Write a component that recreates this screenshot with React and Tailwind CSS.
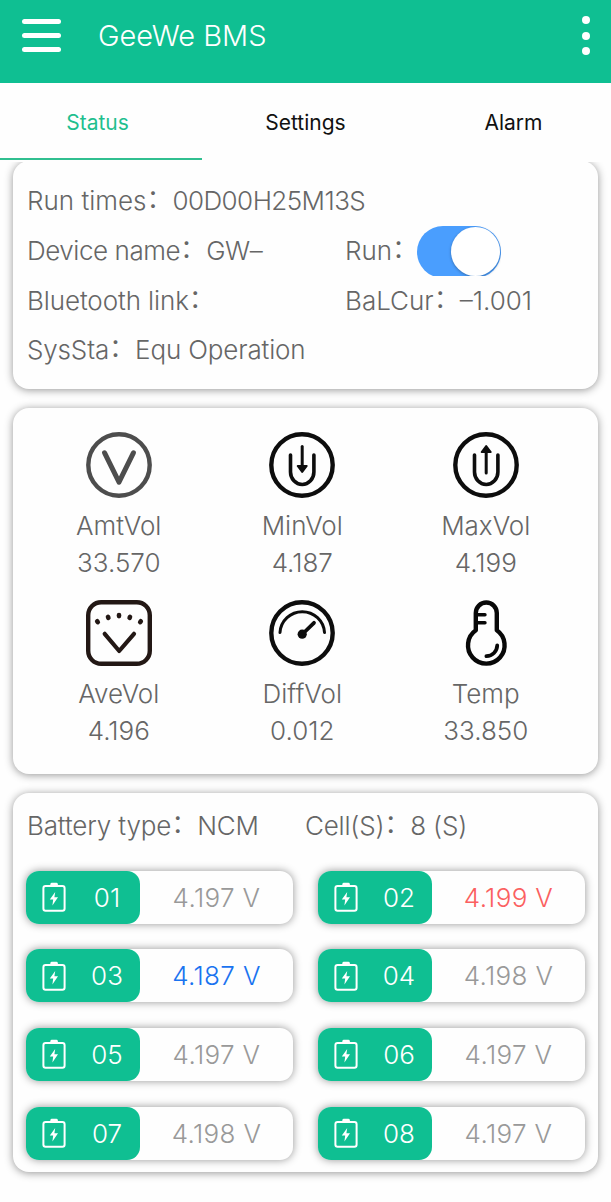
import React, { useState } from 'react';

const tabs = ['Status', 'Settings', 'Alarm'];

const cells = [
  { id: '01', voltage: '4.197' },
  { id: '02', voltage: '4.199', color: 'text-[#fb6060]' },
  { id: '03', voltage: '4.187', color: 'text-[#1a73f0]' },
  { id: '04', voltage: '4.198' },
  { id: '05', voltage: '4.197' },
  { id: '06', voltage: '4.197' },
  { id: '07', voltage: '4.198' },
  { id: '08', voltage: '4.197' }
];

const iconProps = {
  viewBox: '0 0 66 66',
  fill: 'none',
  strokeLinecap: 'round',
  className: 'h-[66px] w-[66px]'
};

const AmtIcon = () => (
  <svg {...iconProps} stroke="#4d4d4d">
    <circle cx="33" cy="33" r="30.7" strokeWidth="4.4" />
    <path d="M18.6 20.8L33 50.2L47.4 20.8" strokeWidth="5" strokeLinejoin="round" />
  </svg>
);

const MinIcon = () => (
  <svg {...iconProps} stroke="#0d0d0d">
    <circle cx="33" cy="33" r="30.7" strokeWidth="4.4" />
    <path d="M21.5 23V40a11.7 12.5 0 0 0 23.4 0V23" strokeWidth="3.6" />
    <path d="M33.2 14.5V34" strokeWidth="3" />
    <path d="M28.7 34H37.7L33.2 40Z" fill="#0d0d0d" strokeWidth="2" strokeLinejoin="round" />
  </svg>
);

const MaxIcon = () => (
  <svg {...iconProps} stroke="#0d0d0d">
    <circle cx="33" cy="33" r="30.7" strokeWidth="4.4" />
    <path d="M21.5 23V40a11.7 12.5 0 0 0 23.4 0V23" strokeWidth="3.6" />
    <path d="M33.2 41V20" strokeWidth="3" />
    <path d="M28.7 20H37.7L33.2 14Z" fill="#0d0d0d" strokeWidth="2" strokeLinejoin="round" />
  </svg>
);

const AveIcon = () => (
  <svg {...iconProps} stroke="#231815">
    <rect x="2.2" y="2.2" width="61.6" height="61.6" rx="13" strokeWidth="4.4" />
    <path d="M18.7 33.8L33.2 51L48 33.8" strokeWidth="4.2" strokeLinejoin="round" />
    <path
      d="M11.2 21.3l.6 .8M22 16.8l.4 1M33 15.1v1M44 16.8l-.4 1M54.8 21.3l-.6 .8"
      strokeWidth="4.6"
    />
  </svg>
);

const DiffIcon = () => (
  <svg {...iconProps} stroke="#0d0d0d">
    <circle cx="33" cy="33" r="30.7" strokeWidth="4.4" />
    <path d="M11 32.5a22.3 22.3 0 0 1 44.5 0" strokeWidth="3" />
    <path d="M33.5 34L45 22.8" strokeWidth="3.8" />
    <circle cx="33.2" cy="34.2" r="4.6" fill="#0d0d0d" stroke="none" />
  </svg>
);

const TempIcon = () => (
  <svg {...iconProps} stroke="#080808">
    <path
      d="M22.8 30.3V13a10.4 10.4 0 0 1 21 0V30.3a18.3 18.3 0 1 1-21 0Z"
      strokeWidth="4.4"
      strokeLinejoin="round"
    />
    <path d="M24 14.8H32M24 22.8H32" strokeWidth="3.4" />
    <path d="M44.2 45.5C44 51.5 39.5 56 33.4 56.2" strokeWidth="3.8" />
  </svg>
);

const stats = [
  { label: 'AmtVol', value: '33.570', Icon: AmtIcon },
  { label: 'MinVol', value: '4.187', Icon: MinIcon },
  { label: 'MaxVol', value: '4.199', Icon: MaxIcon },
  { label: 'AveVol', value: '4.196', Icon: AveIcon },
  { label: 'DiffVol', value: '0.012', Icon: DiffIcon },
  { label: 'Temp', value: '33.850', Icon: TempIcon }
];

const BatteryIcon = () => (
  <svg viewBox="0 0 24 30" className="h-[30px] w-6 shrink-0" fill="none">
    <rect x="1.4" y="4" width="21.2" height="24.8" rx="2.2" stroke="#fff" strokeWidth="2" />
    <path d="M8.4 3.4V2.2Q8.4 .8 9.8 .8H14.4Q15.8 .8 15.8 2.2V3.4Z" fill="#fff" />
    <path d="M13.2 10L7.8 17.6H11.2L10.4 23.6L16 15.2H12.4Z" fill="#fff" />
  </svg>
);

// The fullwidth colon is lifted to sit in the middle of the caps
const Colon = () => <span className="relative -top-0.5 tracking-normal">：</span>;

const Card = ({ className, children }) => (
  <section
    className={`rounded-[16px] bg-[#fefefe] shadow-[0_1px_9px_rgba(0,0,0,0.42)] ${className}`}
  >
    {children}
  </section>
);

const Switch = ({ checked, onChange }) => (
  <button
    type="button"
    role="switch"
    aria-checked={checked}
    aria-label="Run"
    onClick={() => onChange(!checked)}
    className="h-[50px] w-[84px] overflow-hidden"
  >
    <span
      className={`flex h-[52px] w-[84px] rounded-full p-px ${
        checked ? 'justify-end bg-[#4a9efe]' : 'justify-start bg-gray-300'
      }`}
    >
      <span className="h-[49px] w-[49px] rounded-full bg-white shadow-[0_1px_3px_rgba(0,0,0,0.3)]" />
    </span>
  </button>
);

const App = () => {
  const [tab, setTab] = useState('Status');
  const [running, setRunning] = useState(true);

  return (
    <div className="h-[1202px] w-[611px] overflow-hidden bg-[#fefefe] font-['Inter','Noto_Sans_CJK_SC',sans-serif] text-[26px] font-[340] text-[#666]">
      <header className="flex h-[83px] items-start bg-[#0fbf92] text-white">
        <button type="button" aria-label="Menu" className="mt-[19px] ml-[22px] flex flex-col gap-[9px]">
          <span className="h-[5px] w-[39px] rounded-full bg-white" />
          <span className="h-[5px] w-[39px] rounded-full bg-white" />
          <span className="h-[5px] w-[39px] rounded-full bg-white" />
        </button>
        <h1 className="mt-[18px] ml-[37px] text-[29px] leading-9 font-[340]">GeeWe BMS</h1>
        <button type="button" aria-label="More" className="mt-4 mr-[21px] ml-auto flex flex-col gap-[7.5px]">
          <span className="h-2 w-2 rounded-full bg-white" />
          <span className="h-2 w-2 rounded-full bg-white" />
          <span className="h-2 w-2 rounded-full bg-white" />
        </button>
      </header>

      <nav className="flex h-[77px] justify-center text-[21px] font-normal">
        {tabs.map((name) => (
          <button
            key={name}
            type="button"
            onClick={() => setTab(name)}
            className={`w-[208px] shrink-0 border-b-2 pt-1 ${
              tab === name ? 'border-[#30bf90] text-[#1fbf8f]' : 'border-transparent text-[#111]'
            }`}
          >
            {name}
          </button>
        ))}
      </nav>

      <main className="mt-0.5 flex flex-col gap-[19px] overflow-hidden px-[13px] pb-8">
        <Card className="-mt-px grid grid-cols-[318px_1fr] grid-rows-[repeat(4,49.7px)] items-center pt-[15px] pb-[14px] pl-[14px] whitespace-nowrap">
          <p className="col-span-2">
            Run times<Colon /><span className="tracking-[-0.55px]">00D00H25M13S</span>
          </p>
          <p className="tracking-[-0.45px]">Device name<Colon />GW–</p>
          <div className="flex items-center">
            <span className="w-[72px]">Run<Colon /></span>
            <Switch checked={running} onChange={setRunning} />
          </div>
          <p className="tracking-[-0.1px]">Bluetooth link<Colon /></p>
          <p>BaLCur<Colon />–1.001</p>
          <p className="col-span-2 tracking-[-0.15px]">SysSta<Colon />Equ Operation</p>
        </Card>

        <Card className="grid h-[366px] grid-cols-[repeat(3,183.5px)] grid-rows-[168px_168px] pt-[24.5px] pl-[14px]">
          {stats.map(({ label, value, Icon }) => (
            <div key={label} className="flex flex-col items-center leading-[37px]">
              <Icon />
              <span className="mt-[9px]">{label}</span>
              <span>{value}</span>
            </div>
          ))}
        </Card>

        <Card className="h-[379px] px-[13px] pt-[13px]">
          <div className="flex h-10 items-center pl-px whitespace-nowrap">
            <span className="w-[278px] tracking-[-0.15px]">Battery type<Colon />NCM</span>
            <span className="tracking-[-0.2px]">Cell(S)<Colon />8 (S)</span>
          </div>
          <div className="mt-[25px] grid grid-cols-2 gap-x-[25px] gap-y-[25.6px]">
            {cells.map((cell) => (
              <div
                key={cell.id}
                className="flex h-[53px] rounded-[13px] bg-[#fefefe] shadow-[0_0_9px_rgba(0,0,0,0.42)]"
              >
                <div className="flex w-[114px] items-center rounded-[13px] bg-[#0fbf92] pl-4 text-white">
                  <BatteryIcon />
                  <span className="ml-4 w-[50px] text-center">{cell.id}</span>
                </div>
                <div
                  className={`flex flex-1 items-center justify-center tracking-[0.35px] ${cell.color || 'text-[#999]'}`}
                >
                  {cell.voltage} V
                </div>
              </div>
            ))}
          </div>
        </Card>
      </main>
    </div>
  );
};

export default App;
